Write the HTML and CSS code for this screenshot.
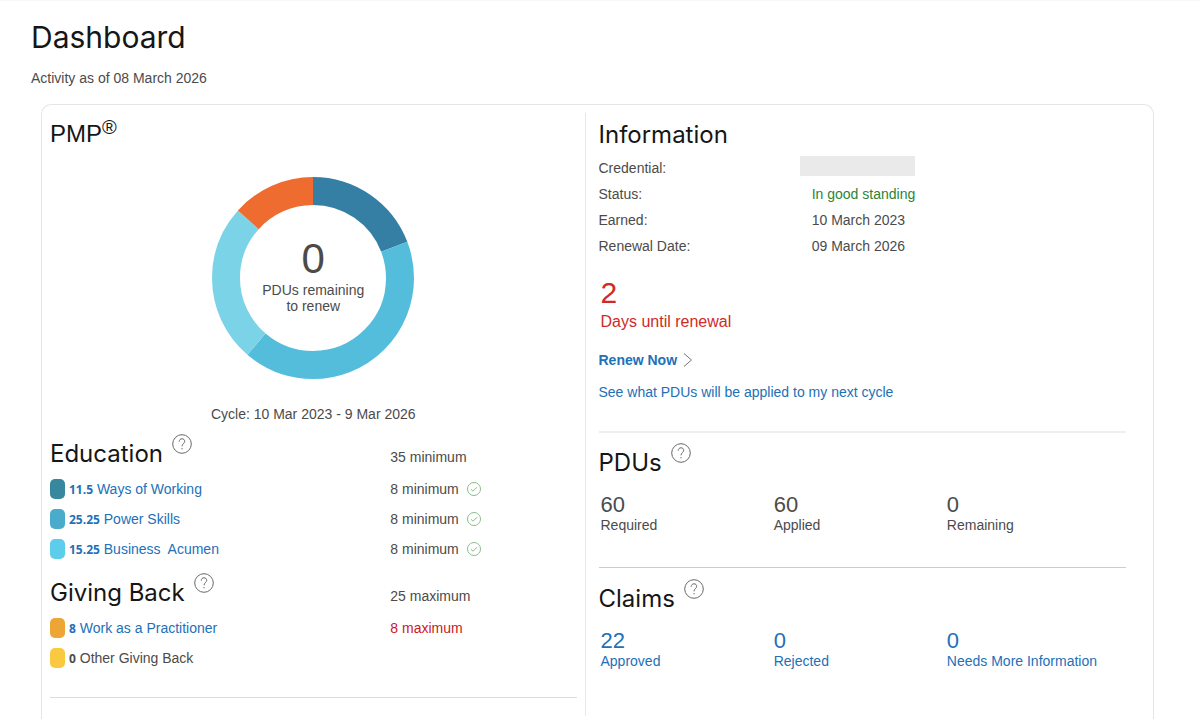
FILE: index.html
```html
<!DOCTYPE html>
<html lang="en">
<head>
<meta charset="utf-8">
<meta name="viewport" content="width=device-width, initial-scale=1">
<title>Dashboard</title>
<link rel="stylesheet" href="styles.css">
</head>
<body>
<svg class="defs" aria-hidden="true">
  <symbol id="help" viewBox="0 0 20 20">
    <circle cx="10" cy="10" r="9.3"/>
    <path d="M7.2 7.7c0-1.700 1.200-2.900 2.800-2.900s2.700 1 2.700 2.500c0 2.200-2.700 2.500-2.700 5M10 14v1.300"/>
  </symbol>
  <symbol id="check" viewBox="0 0 14 14">
    <circle cx="7" cy="7" r="6.5"/>
    <path d="M4 7.3l2 1.900 4.200-4.100"/>
  </symbol>
</svg>
<main class="page">
  <h1 class="title">Dashboard</h1>
  <p class="as-of">Activity as of 08 March 2026</p>
  <div class="card">
    <section class="column column-left">
      <h2 class="heading heading-pmp">PMP<sup class="reg">®</sup></h2>
      <div class="chart">
        <svg class="donut" viewBox="0 0 202 202" role="img" aria-label="PDUs by category">
          <g transform="rotate(-90 101 101)">
            <circle class="arc arc-ways" cx="101" cy="101" r="87" pathLength="360" stroke-dasharray="69 291"/>
            <circle class="arc arc-power" cx="101" cy="101" r="87" pathLength="360" stroke-dasharray="151.5 208.5" stroke-dashoffset="-69"/>
            <circle class="arc arc-business" cx="101" cy="101" r="87" pathLength="360" stroke-dasharray="91.5 268.5" stroke-dashoffset="-220.5"/>
            <circle class="arc arc-giving" cx="101" cy="101" r="87" pathLength="360" stroke-dasharray="48 312" stroke-dashoffset="-312"/>
          </g>
        </svg>
        <div class="chart-label">
          <span class="chart-value">0</span>
          <span>PDUs remaining<br>to renew</span>
        </div>
      </div>
      <p class="cycle">Cycle: 10 Mar 2023 - 9 Mar 2026</p>

      <div class="group-head">
        <div class="heading-row">
          <h2 class="heading">Education</h2>
          <button class="help" type="button" aria-label="About education"><svg class="icon"><use href="#help"/></svg></button>
        </div>
        <span class="limit">35 minimum</span>
      </div>
      <ul class="items">
        <li class="item"><span class="name"><i class="swatch swatch-ways"></i><a class="link" href="#"><b class="count">11.5</b> Ways of Working</a></span><span class="limit">8 minimum<svg class="check"><use href="#check"/></svg></span></li>
        <li class="item"><span class="name"><i class="swatch swatch-power"></i><a class="link" href="#"><b class="count">25.25</b> Power Skills</a></span><span class="limit">8 minimum<svg class="check"><use href="#check"/></svg></span></li>
        <li class="item"><span class="name"><i class="swatch swatch-business"></i><a class="link" href="#"><b class="count">15.25</b> Business&nbsp; Acumen</a></span><span class="limit">8 minimum<svg class="check"><use href="#check"/></svg></span></li>
      </ul>

      <div class="group-head">
        <div class="heading-row">
          <h2 class="heading">Giving Back</h2>
          <button class="help" type="button" aria-label="About giving back"><svg class="icon"><use href="#help"/></svg></button>
        </div>
        <span class="limit">25 maximum</span>
      </div>
      <ul class="items">
        <li class="item"><span class="name"><i class="swatch swatch-work"></i><a class="link" href="#"><b class="count">8</b> Work as a Practitioner</a></span><span class="limit limit-full">8 maximum</span></li>
        <li class="item"><span class="name"><i class="swatch swatch-other"></i><span><b class="count">0</b> Other Giving Back</span></span></li>
      </ul>
      <hr class="rule rule-left">
    </section>

    <section class="column column-right">
      <h2 class="heading heading-info">Information</h2>
      <dl class="info">
        <dt>Credential:</dt><dd class="masked"><span class="mask"></span></dd>
        <dt>Status:</dt><dd class="good">In good standing</dd>
        <dt>Earned:</dt><dd>10 March 2023</dd>
        <dt>Renewal Date:</dt><dd>09 March 2026</dd>
      </dl>
      <p class="countdown"><span class="days">2</span><span class="days-label">Days until renewal</span></p>
      <p class="renew"><a class="link renew-link" href="#">Renew Now<svg class="chevron" viewBox="0 0 10 16"><path d="M1 1.500l7.500 6.500L1 14.500"/></svg></a></p>
      <p class="next-cycle"><a class="link" href="#">See what PDUs will be applied to my next cycle</a></p>
      <hr class="rule rule-light">

      <div class="heading-row">
        <h2 class="heading">PDUs</h2>
        <button class="help" type="button" aria-label="About PDUs"><svg class="icon"><use href="#help"/></svg></button>
      </div>
      <div class="stats">
        <div class="stat"><span class="stat-value">60</span><span>Required</span></div>
        <div class="stat"><span class="stat-value">60</span><span>Applied</span></div>
        <div class="stat"><span class="stat-value">0</span><span>Remaining</span></div>
      </div>
      <hr class="rule rule-dark">

      <div class="heading-row">
        <h2 class="heading">Claims</h2>
        <button class="help" type="button" aria-label="About claims"><svg class="icon"><use href="#help"/></svg></button>
      </div>
      <div class="stats">
        <a class="stat link" href="#"><span class="stat-value">22</span><span>Approved</span></a>
        <a class="stat link" href="#"><span class="stat-value">0</span><span>Rejected</span></a>
        <a class="stat link" href="#"><span class="stat-value">0</span><span>Needs More Information</span></a>
      </div>
    </section>
  </div>
</main>
</body>
</html>
```

FILE: styles.css
```css
* { box-sizing: border-box; }

body {
  margin: 0;
  background: #fff;
  color: #4b4b4b;
  font: 14px/16px "Liberation Sans", Arial, sans-serif;
}

h1, h2, p, ul, dl, dd { margin: 0; padding: 0; }
ul { list-style: none; }

.defs { position: absolute; width: 0; height: 0; }

.page {
  display: flex;
  flex-direction: column;
  min-height: 100vh;
  padding: 16px 46px 0 31px;
  border-top: 1px solid #f7f7f7;
}

.title {
  font: 400 30px/40px Inter, sans-serif;
  color: #161616;
}

.as-of { margin-top: 13px; }

.card {
  flex: 1;
  display: grid;
  grid-template-columns: 544fr 568fr;
  margin: 18px 0 0 10px;
  padding: 8px 0 3px;
  border: 1px solid #e5e5e5;
  border-bottom: 0;
  border-radius: 10px 10px 0 0;
}

.column-left {
  padding: 0 8px;
  border-right: 1px solid #e8e8e8;
}

.column-right { padding: 0 27px 0 13px; }

.heading {
  font: 400 24px/32px Inter, sans-serif;
  color: #161616;
}

.heading-pmp {
  margin-top: 5px;
  font-family: "Liberation Sans", Arial, sans-serif;
}

.reg {
  font-size: 20px;
  line-height: 0;
  vertical-align: 8px;
}

.chart {
  display: grid;
  place-items: center;
  margin-top: 27px;
}

.donut, .chart-label { grid-area: 1 / 1; }
.donut { display: block; width: 202px; }
.arc { fill: none; stroke-width: 28; }
.arc-ways { stroke: #357fa5; }
.arc-power { stroke: #54bddc; }
.arc-business { stroke: #7bd3e8; }
.arc-giving { stroke: #ee6c30; }

.chart-label {
  display: flex;
  flex-direction: column;
  padding-bottom: 6px;
  text-align: center;
}

.chart-value { font-size: 42px; line-height: 46px; }

.cycle { margin: 27px 0 16px; text-align: center; }

.group-head, .item {
  display: grid;
  grid-template-columns: 340fr 186fr;
  align-items: center;
}

.group-head .limit { padding-top: 6px; }

.heading-row { display: flex; gap: 9px; }

.help {
  width: 20px;
  height: 20px;
  margin-top: -4px;
  padding: 0;
  border: 0;
  background: none;
}

.icon {
  display: block;
  width: 20px;
  height: 20px;
  fill: none;
  stroke: #686868;
}

.items { margin: 4px 0 13px; }
.item { height: 30px; }
.name { display: flex; align-items: center; gap: 4px; }

.swatch { width: 15px; height: 20px; border-radius: 5px; }
.swatch-ways { background: #37879f; }
.swatch-power { background: #4aaccb; }
.swatch-business { background: #5ccdeb; }
.swatch-work { background: #eda536; }
.swatch-other { background: #f9c93f; }

.count { font: 700 12px/16px "Open Sans", sans-serif; }

.link { color: #2270b8; text-decoration: none; }

.limit { display: flex; align-items: center; gap: 8px; }
.limit-full { color: #c8201f; }

.check {
  width: 14px;
  height: 14px;
  fill: none;
  stroke: #8bbd8d;
}

.rule { width: 100%; margin: 0; border: 0; border-top: 1px solid #ddd; }
.rule-left { margin-top: 24px; }
.rule-light { margin: 31px 0 14px; border-top: 2px solid #eee; }
.rule-dark { margin: 34px 0 15px; border-color: #ccc; }

.heading-info { margin-top: 6px; }

.info {
  display: grid;
  grid-template-columns: 201fr 326fr;
  grid-auto-rows: 26px;
  align-items: center;
  margin-top: 4px;
}

.info dd { padding-left: 12px; }
.info .masked { padding: 0 0 4px; }
.mask { display: block; width: 115px; height: 20px; background: #eaeaea; }
.good { color: #2b8437; }

.countdown {
  display: flex;
  flex-direction: column;
  margin-top: 17px;
  padding-left: 2px;
  color: #cf2a27;
}

.days { font-size: 30px; line-height: 34px; }
.days-label { font-size: 16px; line-height: 24px; }

.renew { margin-top: 18px; font-weight: 700; }
.renew-link { display: inline-flex; align-items: center; gap: 6px; }
.chevron { width: 10px; height: 16px; fill: none; stroke: #777; }
.next-cycle { margin-top: 16px; }

.stats {
  display: grid;
  grid-template-columns: repeat(3, 1fr);
  margin-top: 14px;
  padding: 0 6px 0 2px;
}

.stat { display: flex; flex-direction: column; white-space: nowrap; }
.stat-value { font-size: 22px; line-height: 24px; }
```
